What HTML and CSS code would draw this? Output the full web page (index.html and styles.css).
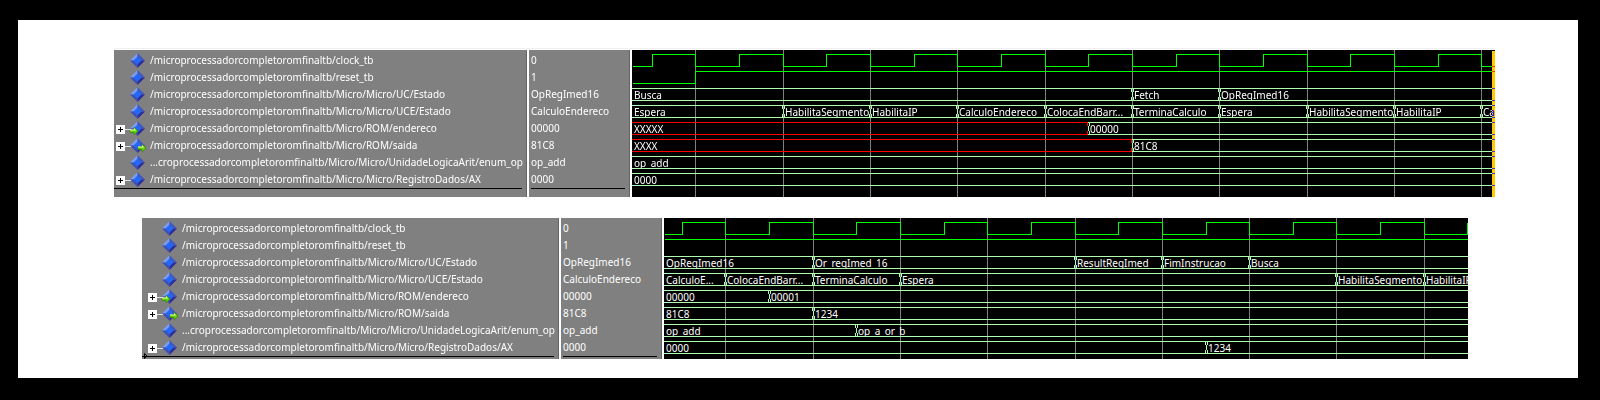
FILE: index.html
```html
<!DOCTYPE html>
<html lang="pt">
<head>
<meta charset="utf-8">
<title>Wave</title>
<link rel="stylesheet" href="styles.css">
</head>
<body>
<svg class="defs" aria-hidden="true">
  <defs>
    <g id="gem">
      <path d="M7.500 0L0 7.500H7.500Z" fill="#7b9cf0"/>
      <path d="M7.500 0L15 7.500H7.500Z" fill="#4058c0"/>
      <path d="M0 7.500L7.500 15V7.500Z" fill="#3c50b8"/>
      <path d="M15 7.500L7.500 15V7.500Z" fill="#2c2c98"/>
      <path d="M7.500 3.500L11.500 7.500L7.500 11.500L3.500 7.500Z" fill="#2468f8"/>
    </g>
    <g id="arrow">
      <path d="M0 2.500H4V0L8 4L4 8V5.500H0Z" fill="#58d800" stroke="#3c7800" stroke-width=".6"/>
      <path d="M0 2.500H4V1L6 3.500H0Z" fill="#f4ffc8"/>
    </g>
  </defs>
</svg>
<main class="sheet">
  <section class="viewer" aria-label="Wave 1">
    <div class="pane names">
      <ul class="rows">
        <li><svg class="icon" viewBox="0 0 18 17"><use href="#gem" x="1" y="1"/></svg>/microprocessadorcompletoromfinaltb/clock_tb</li>
        <li><svg class="icon" viewBox="0 0 18 17"><use href="#gem" x="1" y="1"/></svg>/microprocessadorcompletoromfinaltb/reset_tb</li>
        <li><svg class="icon" viewBox="0 0 18 17"><use href="#gem" x="1" y="1"/></svg>/microprocessadorcompletoromfinaltb/Micro/Micro/UC/Estado</li>
        <li><svg class="icon" viewBox="0 0 18 17"><use href="#gem" x="1" y="1"/></svg>/microprocessadorcompletoromfinaltb/Micro/Micro/UCE/Estado</li>
        <li class="tree"><button class="expand" type="button" aria-label="Expand endereco"></button><svg class="icon" viewBox="0 0 18 17"><use href="#gem" x="1" y="1"/><use href="#arrow" x="1" y="7"/></svg>/microprocessadorcompletoromfinaltb/Micro/ROM/endereco</li>
        <li class="tree"><button class="expand" type="button" aria-label="Expand saida"></button><svg class="icon" viewBox="0 0 18 17"><use href="#gem" x="1" y="1"/><use href="#arrow" x="9" y="7"/></svg>/microprocessadorcompletoromfinaltb/Micro/ROM/saida</li>
        <li><svg class="icon" viewBox="0 0 18 17"><use href="#gem" x="1" y="1"/></svg>...croprocessadorcompletoromfinaltb/Micro/Micro/UnidadeLogicaArit/enum_op</li>
        <li class="tree"><button class="expand" type="button" aria-label="Expand AX"></button><svg class="icon" viewBox="0 0 18 17"><use href="#gem" x="1" y="1"/></svg>/microprocessadorcompletoromfinaltb/Micro/Micro/RegistroDados/AX</li>
      </ul>
    </div>
    <div class="pane values">
      <ul class="rows">
        <li>0</li><li>1</li><li>OpRegImed16</li><li>CalculoEndereco</li><li>00000</li><li>81C8</li><li>op_add</li><li>0000</li>
      </ul>
    </div>
    <div class="waves">
      <svg class="trace" aria-hidden="true">
        <path class="grid" d="M63.500 0V147M151.500 0V147M238.500 0V147M325.500 0V147M413.500 0V147M500.500 0V147M587.500 0V147M675.500 0V147M762.500 0V147M849.500 0V147"/>
        <path class="bit" d="M1 16.500H20.500V4.500H63.500V16.500H107.500V4.500H151.500V16.500H194.500V4.500H238.500V16.500H282.500V4.500H325.500V16.500H369.500V4.500H413.500V16.500H456.500V4.500H500.500V16.500H544.500V4.500H587.500V16.500H631.500V4.500H675.500V16.500H718.500V4.500H762.500V16.500H806.500V4.500H849.500V16.500H863"/>
        <path class="bit" d="M1 33.500H63.500V21.500H863"/>
      </svg>
      <div class="buses">
        <div class="bus"><span style="width:500px">Busca</span><span style="width:87px">Fetch</span><span>OpRegImed16</span></div>
        <div class="bus"><span style="width:151px">Espera</span><span style="width:87px">HabilitaSegmento</span><span style="width:87px">HabilitaIP</span><span style="width:88px">CalculoEndereco</span><span style="width:87px">ColocaEndBarr...</span><span style="width:87px">TerminaCalculo</span><span style="width:88px">Espera</span><span style="width:87px">HabilitaSegmento</span><span style="width:87px">HabilitaIP</span><span>Ca</span></div>
        <div class="bus"><span class="unknown" style="width:456px">XXXXX</span><span>00000</span></div>
        <div class="bus"><span class="unknown" style="width:500px">XXXX</span><span>81C8</span></div>
        <div class="bus"><span>op_add</span></div>
        <div class="bus"><span>0000</span></div>
      </div>
      <div class="cursor"></div>
    </div>
  </section>

  <section class="viewer second" aria-label="Wave 2">
    <div class="pane names">
      <ul class="rows">
        <li><svg class="icon" viewBox="0 0 18 17"><use href="#gem" x="1" y="1"/></svg>/microprocessadorcompletoromfinaltb/clock_tb</li>
        <li><svg class="icon" viewBox="0 0 18 17"><use href="#gem" x="1" y="1"/></svg>/microprocessadorcompletoromfinaltb/reset_tb</li>
        <li><svg class="icon" viewBox="0 0 18 17"><use href="#gem" x="1" y="1"/></svg>/microprocessadorcompletoromfinaltb/Micro/Micro/UC/Estado</li>
        <li><svg class="icon" viewBox="0 0 18 17"><use href="#gem" x="1" y="1"/></svg>/microprocessadorcompletoromfinaltb/Micro/Micro/UCE/Estado</li>
        <li class="tree"><button class="expand" type="button" aria-label="Expand endereco"></button><svg class="icon" viewBox="0 0 18 17"><use href="#gem" x="1" y="1"/><use href="#arrow" x="1" y="7"/></svg>/microprocessadorcompletoromfinaltb/Micro/ROM/endereco</li>
        <li class="tree"><button class="expand" type="button" aria-label="Expand saida"></button><svg class="icon" viewBox="0 0 18 17"><use href="#gem" x="1" y="1"/><use href="#arrow" x="9" y="7"/></svg>/microprocessadorcompletoromfinaltb/Micro/ROM/saida</li>
        <li><svg class="icon" viewBox="0 0 18 17"><use href="#gem" x="1" y="1"/></svg>...croprocessadorcompletoromfinaltb/Micro/Micro/UnidadeLogicaArit/enum_op</li>
        <li class="tree"><button class="expand" type="button" aria-label="Expand AX"></button><svg class="icon" viewBox="0 0 18 17"><use href="#gem" x="1" y="1"/></svg>/microprocessadorcompletoromfinaltb/Micro/Micro/RegistroDados/AX</li>
      </ul>
      <svg class="marker" viewBox="0 0 4 6" aria-hidden="true"><path d="M.5 .5L3 3L.5 5.500Z" fill="none" stroke="#000"/></svg>
    </div>
    <div class="pane values">
      <ul class="rows">
        <li>0</li><li>1</li><li>OpRegImed16</li><li>CalculoEndereco</li><li>00000</li><li>81C8</li><li>op_add</li><li>0000</li>
      </ul>
    </div>
    <div class="waves">
      <svg class="trace" aria-hidden="true">
        <path class="grid" d="M61.500 0V147M149.500 0V147M236.500 0V147M323.500 0V147M411.500 0V147M498.500 0V147M585.500 0V147M672.500 0V147M760.500 0V147"/>
        <path class="bit" d="M1 16.500H18.500V4.500H61.500V16.500H105.500V4.500H149.500V16.500H192.500V4.500H236.500V16.500H280.500V4.500H323.500V16.500H367.500V4.500H411.500V16.500H454.500V4.500H498.500V16.500H542.500V4.500H585.500V16.500H629.500V4.500H672.500V16.500H716.500V4.500H760.500V16.500H803.500V4.500"/>
        <path class="bit" d="M1 21.500H804"/>
      </svg>
      <div class="buses">
        <div class="bus"><span style="width:149px">OpRegImed16</span><span style="width:262px">Or_regImed_16</span><span style="width:87px">ResultRegImed</span><span style="width:87px">FimInstrucao</span><span>Busca</span></div>
        <div class="bus"><span style="width:61px">CalculoE...</span><span style="width:88px">ColocaEndBarr...</span><span style="width:87px">TerminaCalculo</span><span style="width:436px">Espera</span><span style="width:88px">HabilitaSegmento</span><span>HabilitaIP</span></div>
        <div class="bus"><span style="width:105px">00000</span><span>00001</span></div>
        <div class="bus"><span style="width:149px">81C8</span><span>1234</span></div>
        <div class="bus"><span style="width:192px">op_add</span><span>op_a_or_b</span></div>
        <div class="bus"><span style="width:542px">0000</span><span>1234</span></div>
      </div>
    </div>
  </section>
</main>
</body>
</html>
```
FILE: styles.css
```css
* { box-sizing: border-box; }

body {
  margin: 0;
  padding: 20px 22px 22px 18px;
  background: #000;
  color: #fff;
  font: 10px/17px "Noto Sans", "Open Sans", sans-serif;
}

.defs { position: absolute; width: 0; height: 0; }

.sheet {
  display: flex;
  flex-direction: column;
  gap: 21px;
  padding: 28px 83px 19px 96px;
  background: #fff;
}

.viewer {
  display: grid;
  grid-template-columns: 415px 103px minmax(0, 1fr);
  border-top: 1px solid #f0f0f0;
  padding-top: 1px;
}

.second {
  border-top: 0;
  padding-top: 0;
  margin: 0 27px 0 28px;
  grid-template-columns: 419px 103px minmax(0, 1fr);
}

.pane {
  position: relative;
  margin-right: 2px;
  padding-top: 2px;
  padding-bottom: 8px;
  border-right: 1px solid #646464;
  background: #808080;
}

.second .pane { padding-bottom: 2px; }

.rows {
  margin: 0;
  padding: 0;
  list-style: none;
  border-bottom: 1px solid #000;
  white-space: nowrap;
}

.names .rows { margin-right: 4px; }
.values .rows { margin: 0 4px 0 2px; }

.rows li {
  display: flex;
  height: 17px;
}

.names li { padding-left: 15px; }
.second .names li { padding-left: 19px; }
.names .tree { padding-left: 2px; }
.second .names .tree { padding-left: 6px; }

.icon {
  flex: none;
  width: 18px;
  height: 17px;
  margin-right: 3px;
}

.expand {
  position: relative;
  flex: none;
  width: 9px;
  height: 9px;
  margin: 5px 4px 0 0;
  padding: 0;
  border: 0;
  background:
    linear-gradient(#000, #000) center / 5px 1px no-repeat,
    linear-gradient(#000, #000) center / 1px 5px no-repeat,
    #fff;
}

.expand::after {
  content: "";
  position: absolute;
  top: 4px;
  left: 9px;
  width: 6px;
  height: 1px;
  background: #e0e0e0;
}

.marker {
  position: absolute;
  left: 2px;
  bottom: 0;
  width: 4px;
  height: 6px;
}

.waves {
  position: relative;
  overflow: hidden;
  background: #000;
}

.trace {
  position: absolute;
  inset: 0;
  width: 100%;
  height: 100%;
}

.grid, .bit {
  fill: none;
  stroke: #808080;
  shape-rendering: crispEdges;
}

.bit { stroke: #0f0; }

.buses {
  position: relative;
  padding-top: 36px;
}

.bus {
  display: flex;
  height: 17px;
  padding: 2px 0;
}

.bus span {
  --line: #b0ffb0;
  position: relative;
  flex: none;
  height: 13px;
  padding-left: 2px;
  border-top: 1px solid var(--line);
  line-height: 13px;
  white-space: nowrap;
  clip-path: inset(0 0 0 -1px);
}

.bus span::after {
  content: "";
  position: absolute;
  left: 0;
  right: 0;
  bottom: 0;
  height: 1px;
  background: var(--line);
}

.bus span:last-child {
  flex: 1;
  min-width: 0;
}

.bus span + span::before {
  --left: #b0ffb0;
  content: "";
  position: absolute;
  top: 0;
  left: -1px;
  width: 3px;
  height: 11px;
  background:
    linear-gradient(var(--left), var(--left)) 0 0 / 1px 3px no-repeat,
    linear-gradient(var(--left), var(--left)) 0 100% / 1px 3px no-repeat,
    linear-gradient(#b0ffb0, #b0ffb0) 100% 0 / 1px 3px no-repeat,
    linear-gradient(#b0ffb0, #b0ffb0) 100% 100% / 1px 3px no-repeat,
    linear-gradient(#b0ffb0, #b0ffb0) 50% 50% / 1px 5px no-repeat;
}

.bus .unknown { --line: #f00; }
.bus .unknown + span::before { --left: #f00; }

.cursor {
  position: absolute;
  top: 1px;
  right: 0;
  bottom: 0;
  width: 3px;
  background: #ffcc00;
  mix-blend-mode: difference;
}
```
